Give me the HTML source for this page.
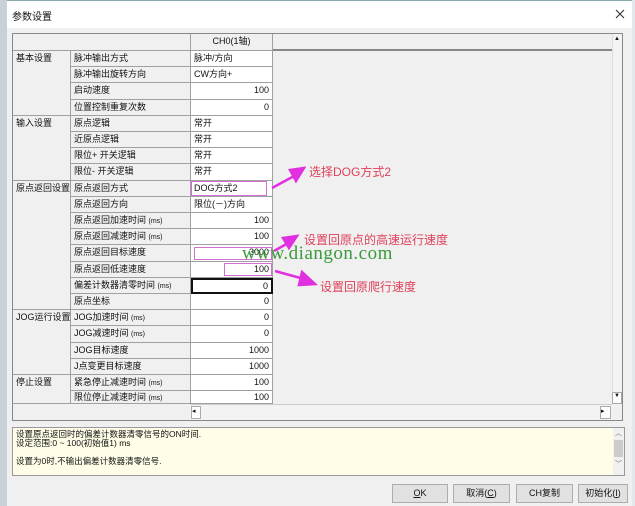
<!DOCTYPE html>
<html><head><meta charset="utf-8"><style>
*{margin:0;padding:0;box-sizing:border-box}
body{width:635px;height:506px;overflow:hidden;background:#f0f0f0;font-family:"Liberation Sans","Noto Sans CJK SC",sans-serif;font-size:9px;color:#111;position:relative}
.a{position:absolute}
.c{position:absolute;border-right:1px solid #a0a0a0;border-bottom:1px solid #a0a0a0;padding-left:3px;line-height:15px;white-space:nowrap;overflow:hidden}
.g{background:#f0f0f0}
.w{background:#fff}
.r{text-align:right;padding-right:3px}
.ms{font-size:7px}
.btn{position:absolute;top:484px;height:19px;border:1px solid #adadad;background:#e1e1e1;text-align:center;line-height:17px;font-size:9px}
.ann{position:absolute;color:#e0405a;font-size:12px;font-family:"Liberation Sans","Noto Sans CJK SC",sans-serif}
</style></head><body>
<div class="a" style="left:0;top:0;width:7px;height:506px;background:#c8d0d8"></div>
<div class="a" style="left:7px;top:0;width:628px;height:28px;background:#fff;border-top:1px solid #8aa"></div>
<div class="a" style="left:12px;top:8px;font-size:10px">参数设置</div>
<svg class="a" style="left:615px;top:9px" width="10" height="10"><path d="M1 1L9 9M9 1L1 9" stroke="#333" stroke-width="1.1"/></svg>
<div class="a" style="left:632px;top:0;width:3px;height:506px;background:#e4e8ee"></div>
<!-- table frame -->
<div class="a" style="left:12px;top:33px;width:611px;height:388px;border:1px solid #888;background:#f0f0f0"></div>
<div class="a" style="left:13px;top:34px;width:599px;height:17px;background:#f0f0f0;border-bottom:2px solid #888"></div>
<div class="c g" style="left:13px;top:34px;width:178px;height:17px"></div>
<div class="c g" style="left:191px;top:34px;width:82px;height:17px;text-align:center;padding:0">CH0(1轴)</div>
<div class="a" style="left:612px;top:34px;width:10px;height:370px;background:#f3f3f3;border-left:1px solid #ddd"></div>
<div class="a" style="left:614px;top:36px;font-size:6px">▲</div>
<div class="a" style="left:612px;top:392px;width:10px;height:12px;font-size:6px;text-align:center;border:1px solid #aaa;background:#fff">▼</div>
<div class="a" style="left:190px;top:404px;width:422px;height:16px;background:#f3f3f3;border-top:1px solid #ccc"></div>
<div class="a" style="left:191px;top:406px;width:10px;height:13px;font-size:7px;border:1px solid #aaa;background:#fff">◂</div>
<div class="a" style="left:600px;top:406px;width:11px;height:13px;font-size:7px;border:1px solid #aaa;background:#fff">▸</div>
<div class="a" style="left:13px;top:404px;width:177px;height:16px;background:#f0f0f0"></div>

<div class="c g" style="left:13px;top:51px;width:58px;height:65px">基本设置</div>
<div class="c g" style="left:13px;top:116px;width:58px;height:65px">输入设置</div>
<div class="c g" style="left:13px;top:181px;width:58px;height:129px">原点返回设置</div>
<div class="c g" style="left:13px;top:310px;width:58px;height:65px">JOG运行设置</div>
<div class="c g" style="left:13px;top:375px;width:58px;height:29px">停止设置</div>

<div class="c g" style="left:71px;top:51px;width:120px;height:16px">脉冲输出方式</div><div class="c w" style="left:191px;top:51px;width:82px;height:16px">脉冲/方向</div>
<div class="c g" style="left:71px;top:67px;width:120px;height:16px">脉冲输出旋转方向</div><div class="c w" style="left:191px;top:67px;width:82px;height:16px">CW方向+</div>
<div class="c g" style="left:71px;top:83px;width:120px;height:17px">启动速度</div><div class="c w r" style="left:191px;top:83px;width:82px;height:17px">100</div>
<div class="c g" style="left:71px;top:100px;width:120px;height:16px">位置控制重复次数</div><div class="c w r" style="left:191px;top:100px;width:82px;height:16px">0</div>
<div class="c g" style="left:71px;top:116px;width:120px;height:16px">原点逻辑</div><div class="c w" style="left:191px;top:116px;width:82px;height:16px">常开</div>
<div class="c g" style="left:71px;top:132px;width:120px;height:16px">近原点逻辑</div><div class="c w" style="left:191px;top:132px;width:82px;height:16px">常开</div>
<div class="c g" style="left:71px;top:148px;width:120px;height:16px">限位+ 开关逻辑</div><div class="c w" style="left:191px;top:148px;width:82px;height:16px">常开</div>
<div class="c g" style="left:71px;top:164px;width:120px;height:17px">限位- 开关逻辑</div><div class="c w" style="left:191px;top:164px;width:82px;height:17px">常开</div>
<div class="c g" style="left:71px;top:181px;width:120px;height:16px">原点返回方式</div><div class="c w" style="left:191px;top:181px;width:82px;height:16px"><span style="position:absolute;left:0;top:0;width:76px;height:15px;border:1px solid #d070d0"></span>DOG方式2</div>
<div class="c g" style="left:71px;top:197px;width:120px;height:16px">原点返回方向</div><div class="c w" style="left:191px;top:197px;width:82px;height:16px">限位(－)方向</div>
<div class="c g" style="left:71px;top:213px;width:120px;height:16px">原点返回加速时间 <span class="ms">(ms)</span></div><div class="c w r" style="left:191px;top:213px;width:82px;height:16px">100</div>
<div class="c g" style="left:71px;top:229px;width:120px;height:16px">原点返回减速时间 <span class="ms">(ms)</span></div><div class="c w r" style="left:191px;top:229px;width:82px;height:16px">100</div>
<div class="c g" style="left:71px;top:245px;width:120px;height:17px">原点返回目标速度</div><div class="c w r" style="left:191px;top:245px;width:82px;height:17px"><span style="position:absolute;left:3px;top:2px;width:78px;height:13px;border:1px solid #d070d0"></span>3000</div>
<div class="c g" style="left:71px;top:262px;width:120px;height:16px">原点返回低速速度</div><div class="c w r" style="left:191px;top:262px;width:82px;height:16px"><span style="position:absolute;left:33px;top:1px;width:48px;height:13px;border:1px solid #d070d0"></span>100</div>
<div class="c g" style="left:71px;top:278px;width:120px;height:16px">偏差计数器清零时间 <span class="ms">(ms)</span></div><div class="c w r" style="left:191px;top:278px;width:82px;height:16px;border:2px solid #111;line-height:12px">0</div>
<div class="c g" style="left:71px;top:294px;width:120px;height:16px">原点坐标</div><div class="c w r" style="left:191px;top:294px;width:82px;height:16px">0</div>
<div class="c g" style="left:71px;top:310px;width:120px;height:16px">JOG加速时间 <span class="ms">(ms)</span></div><div class="c w r" style="left:191px;top:310px;width:82px;height:16px">0</div>
<div class="c g" style="left:71px;top:326px;width:120px;height:17px">JOG减速时间 <span class="ms">(ms)</span></div><div class="c w r" style="left:191px;top:326px;width:82px;height:17px">0</div>
<div class="c g" style="left:71px;top:343px;width:120px;height:16px">JOG目标速度</div><div class="c w r" style="left:191px;top:343px;width:82px;height:16px">1000</div>
<div class="c g" style="left:71px;top:359px;width:120px;height:16px">J点变更目标速度</div><div class="c w r" style="left:191px;top:359px;width:82px;height:16px">1000</div>
<div class="c g" style="left:71px;top:375px;width:120px;height:16px">紧急停止减速时间 <span class="ms">(ms)</span></div><div class="c w r" style="left:191px;top:375px;width:82px;height:16px">100</div>
<div class="c g" style="left:71px;top:391px;width:120px;height:13px;line-height:13px">限位停止减速时间 <span class="ms">(ms)</span></div><div class="c w r" style="left:191px;top:391px;width:82px;height:13px;line-height:13px">100</div>

<div class="a" style="left:12px;top:427px;width:613px;height:49px;background:#fffde8;border:1px solid #999;padding:2px 3px;line-height:9px;font-size:8.5px">设置原点返回时的偏差计数器清零信号的ON时间.<br>设定范围:0 ~ 100(初始值1) ms<br><br>设置为0时,不输出偏差计数器清零信号.</div>
<div class="a" style="left:613px;top:428px;width:11px;height:47px;background:#f0f0f0;font-size:7px;text-align:center;color:#666">︿<div style="height:17px;background:#ccc;margin:2px 1px"></div>﹀</div>

<div class="btn" style="left:392px;width:56px"><u>O</u>K</div>
<div class="btn" style="left:453px;width:57px">取消(<u>C</u>)</div>
<div class="btn" style="left:516px;width:57px">CH复制</div>
<div class="btn" style="left:578px;width:50px">初始化(<u>I</u>)</div>

<svg class="a" style="left:0;top:0" width="635" height="506">
<g stroke="#e030e0" stroke-width="2.5" fill="#e030e0">
<line x1="272" y1="188" x2="296" y2="175"/><polygon points="304,168 290,170 296,181"/>
<line x1="274" y1="251" x2="290" y2="242"/><polygon points="297,236 283,238 289,248"/>
<line x1="275" y1="271" x2="304" y2="279"/><polygon points="315,284 302,272 299,285"/>
</g></svg>
<div class="ann" style="left:309px;top:163px">选择DOG方式2</div>
<div class="ann" style="left:304px;top:231px">设置回原点的高速运行速度</div>
<div class="ann" style="left:320px;top:278px">设置回原爬行速度</div>
<div class="a" style="left:242px;top:243px;font-family:'Liberation Serif',serif;font-size:19px;color:#3a9a3a;letter-spacing:0.5px">www.diangon.com</div>
</body></html>
